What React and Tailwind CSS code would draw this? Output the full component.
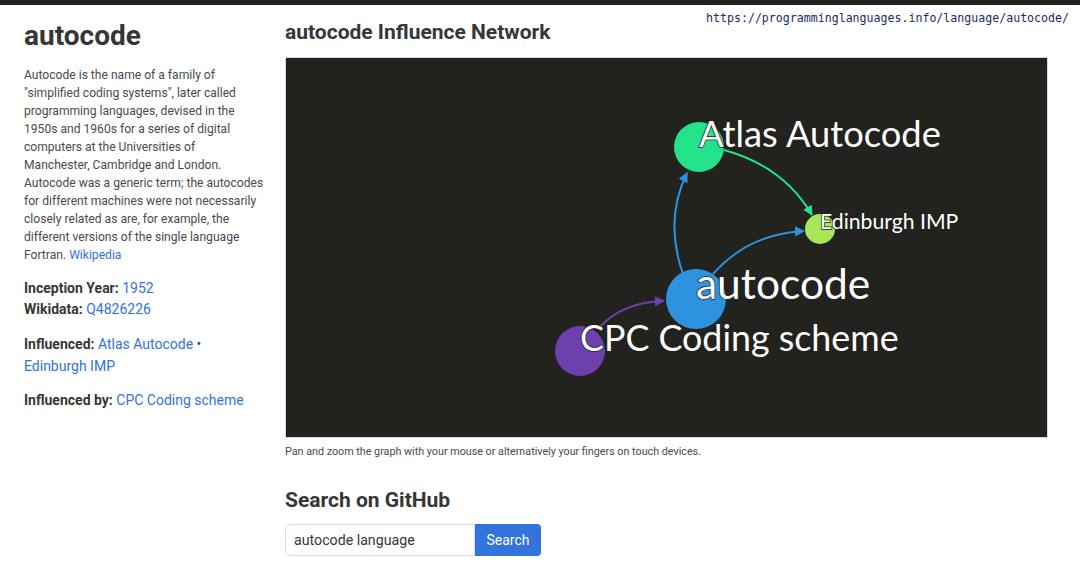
import React from 'react'

const NODES = [
  { id: 'atlas', label: 'Atlas Autocode', x: 413, y: 89, r: 25, color: '#23e38a', size: 36.3 },
  { id: 'edin', label: 'Edinburgh IMP', x: 534, y: 171, r: 15, color: '#a7e85b', size: 21.2 },
  { id: 'auto', label: 'autocode', x: 410, y: 241, r: 30, color: '#2d93df', size: 42.5 },
  { id: 'cpc', label: 'CPC Coding scheme', x: 294, y: 293, r: 25, color: '#6d40ad', size: 35.8 },
]

const EDGES = [
  { d: 'M 397 216 Q 378 162 401 115', color: '#2d93df', m: 'blue' },
  { d: 'M 427 216 Q 462 176 518 173', color: '#2d93df', m: 'blue' },
  { d: 'M 438 92 Q 497 108 526 157', color: '#23e38a', m: 'green' },
  { d: 'M 313 270 Q 336 244 378 243', color: '#6d40ad', m: 'purple' },
]

const ABOUT = [
  'Autocode is the name of a family of',
  '"simplified coding systems", later called',
  'programming languages, devised in the',
  '1950s and 1960s for a series of digital',
  'computers at the Universities of',
  'Manchester, Cambridge and London.',
  'Autocode was a generic term; the autocodes',
  'for different machines were not necessarily',
  'closely related as are, for example, the',
  'different versions of the single language',
]

function Graph() {
  return (
    <svg width="763" height="380" viewBox="0 0 763 380" className="block">
      <defs>
        {[['blue', '#2d93df'], ['green', '#23e38a'], ['purple', '#6d40ad']].map(([k, c]) => (
          <marker key={k} id={'arrow-' + k} viewBox="0 0 10 10" refX="9" refY="5" markerWidth="5" markerHeight="5" orient="auto">
            <path d="M0 0 L10 5 L0 10 z" fill={c} />
          </marker>
        ))}
      </defs>
      {EDGES.map((e, i) => (
        <path key={i} d={e.d} fill="none" stroke={e.color} strokeWidth="2" markerEnd={'url(#arrow-' + e.m + ')'} />
      ))}
      {NODES.map((n) => (
        <circle key={n.id} cx={n.x} cy={n.y} r={n.r} fill={n.color} />
      ))}
      {NODES.map((n) => (
        <text key={n.id + '-t'} x={n.x} y={n.y} fontSize={n.size} fill="#fff" stroke="#22221e" strokeWidth="1.5"
          paintOrder="stroke" style={{ fontFamily: 'Lato, "Open Sans", sans-serif' }}>
          {n.label}
        </text>
      ))}
    </svg>
  )
}

export default function App() {
  return (
    <div className="relative min-h-[573px] bg-white text-[#4a4a4a] font-['Roboto','Noto_Sans',sans-serif]">
      <div className="h-[5px] bg-[#22221e]" />
      <div className="absolute top-[10px] right-[11px] text-[11.6px] text-[#1b2b5e] font-['DejaVu_Sans_Mono',monospace]">
        https://programminglanguages.info/language/autocode/
      </div>
      <div className="flex">
        <aside className="w-[285px] shrink-0 pl-6 pr-[18px]">
          <h1 className="mt-[13px] text-[28px] leading-[36px] font-bold text-[#363636]">autocode</h1>
          <p className="mt-[12px] text-[12.1px] leading-[18px] whitespace-nowrap">
            {ABOUT.map((line) => (
              <React.Fragment key={line}>{line}<br /></React.Fragment>
            ))}
            Fortran. <a className="text-[#3273dc]">Wikipedia</a>
          </p>
          <div className="mt-[14px] text-[14px] leading-[21px]">
            <div><b className="font-bold text-[#363636]">Inception Year:</b> <a className="text-[#3273dc]">1952</a></div>
            <div><b className="font-bold text-[#363636]">Wikidata:</b> <a className="text-[#3273dc]">Q4826226</a></div>
          </div>
          <div className="mt-[13px] text-[14px] leading-[22px]">
            <b className="font-bold text-[#363636]">Influenced:</b> <a className="text-[#3273dc]">Atlas Autocode</a> •<br />
            <a className="text-[#3273dc]">Edinburgh IMP</a>
          </div>
          <div className="mt-[12px] text-[14px] leading-[22px]">
            <b className="font-bold text-[#363636]">Influenced by:</b> <a className="text-[#3273dc]">CPC Coding scheme</a>
          </div>
        </aside>
        <main className="w-[763px]">
          <h2 className="mt-[14px] text-[21px] leading-[26px] font-bold text-[#363636]">autocode Influence Network</h2>
          <div className="mt-[12px] bg-[#22221e] border border-[#d8d8d8] w-[763px] h-[381px] overflow-hidden">
            <Graph />
          </div>
          <p className="mt-[6px] text-[10.75px] leading-[15px]">Pan and zoom the graph with your mouse or alternatively your fingers on touch devices.</p>
          <h2 className="mt-[28px] text-[21px] leading-[26px] font-bold text-[#363636]">Search on GitHub</h2>
          <div className="mt-[11px] flex">
            <input readOnly value="autocode language" className="w-[190px] h-[32px] px-[8px] text-[14.2px] text-[#363636] border border-[#dbdbdb] rounded-l-[4px] bg-white outline-none" />
            <button className="h-[32px] w-[66px] text-[14px] text-white bg-[#3273dc] rounded-r-[4px]">Search</button>
          </div>
        </main>
      </div>
    </div>
  )
}
